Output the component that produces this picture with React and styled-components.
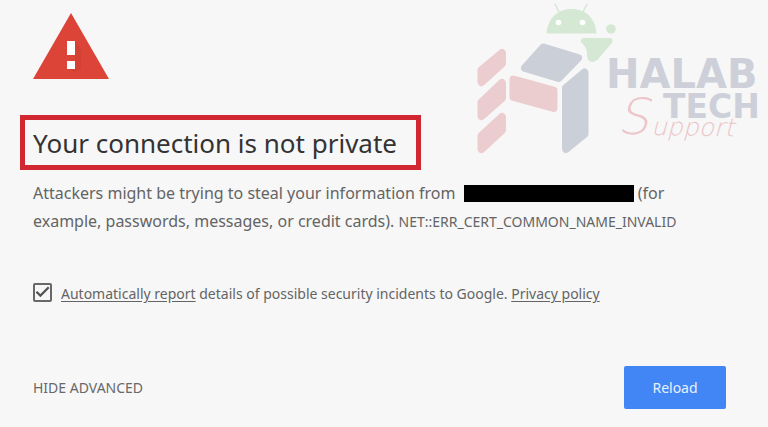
import React from "react";
import styled, { createGlobalStyle } from "styled-components";

const GlobalStyle = createGlobalStyle`
  * { box-sizing: border-box; }
  body {
    margin: 0;
    background: #f7f7f7;
    color: #646464;
    font-family: "Noto Sans", "Open Sans", sans-serif;
  }
`;

const Page = styled.main`
  position: relative;
  padding: 13px 42px 18px 33px;
`;

const WarningIcon = styled.svg`
  display: block;
  width: 76px;
  height: 66px;
`;

const Watermark = styled.svg`
  position: absolute;
  top: 0;
  right: 0;
  width: 298px;
  height: 160px;
  pointer-events: none;
`;

const Title = styled.h1`
  width: fit-content;
  margin: 36px 0 0 -13px;
  padding: 5px 19px 4px 8px;
  border: 5px solid #d02730;
  color: #333;
  font-size: 26px;
  font-weight: 400;
  line-height: 36px;
`;

const Message = styled.p`
  margin: 9px 0 0;
  font-size: 16px;
  line-height: 28px;
`;

const Redacted = styled.span`
  display: inline-block;
  width: 170px;
  height: 17px;
  margin: 0 0 0 4px;
  background: #000;
  vertical-align: -3px;
`;

const ErrorCode = styled.span`
  font-size: 14px;
`;

const ReportRow = styled.div`
  display: flex;
  align-items: center;
  gap: 9px;
  margin-top: 46px;
  font-size: 14px;
  line-height: 24px;
`;

const Checkbox = styled.input`
  appearance: none;
  flex: none;
  display: grid;
  place-items: center;
  width: 19px;
  height: 19px;
  margin: 0 0 4px;
  border: 2px solid #686868;
  border-radius: 2px;

  &:checked::before {
    content: "";
    width: 15px;
    height: 13px;
    background: #555;
    clip-path: polygon(4% 53%, 15% 42%, 36% 66%, 86% 8%, 97% 19%, 36% 90%);
  }
`;

const Link = styled.a`
  color: inherit;
  text-decoration: underline;
  text-underline-offset: 2px;
`;

const Actions = styled.div`
  display: flex;
  align-items: center;
  justify-content: space-between;
  margin-top: 60px;
`;

const TextButton = styled.button`
  padding: 0;
  border: 0;
  background: none;
  color: #686868;
  font: 14px/20px "Noto Sans", "Open Sans", sans-serif;
`;

const PrimaryButton = styled.button`
  min-width: 102px;
  padding: 12px 20px 11px;
  border: 0;
  border-radius: 2px;
  background: #4285f4;
  color: #e8f1ff;
  font: 14px/20px "Noto Sans", "Open Sans", sans-serif;
`;

const Brand = styled.text`
  fill: #cdd0d9;
  font-family: "DejaVu Sans", sans-serif;
  font-weight: 700;
  font-size: ${(p) => p.$size}px;
`;

const Script = styled.text`
  fill: #ebc5ca;
  font-family: "DejaVu Sans Light", "DejaVu Sans", sans-serif;
  font-style: italic;
  font-weight: 200;
  font-size: ${(p) => p.$size}px;
`;

function Logo() {
  return (
    <Watermark viewBox="470 0 298 160" role="img" aria-label="Halab Tech Support">
      <g fill="#d5e8d4" stroke="#d5e8d4">
        <path stroke="none" d="M546.5 33.5c1-14 10-24.500 25-24.500s24 10 25 24.500z" />
        <path fill="none" strokeWidth="1.500" strokeLinecap="round" d="M559 12l-4-8M583 12l4-8" />
        <circle stroke="none" cx="611" cy="29" r="4.800" />
        <path strokeWidth="6" strokeLinejoin="round" d="M584 41h25.500l-14 16.500q-5 4-5.500-2 .5-9-6-14.500z" />
      </g>
      <circle cx="558.500" cy="22.500" r="2.800" fill="#fff" />
      <circle cx="582.500" cy="22.500" r="2.800" fill="#fff" />
      <g fill="#cbcfd8" stroke="#cbcfd8" strokeWidth="8" strokeLinejoin="round">
        <path d="M543.500 47.500L578 58 558.500 78 525 68z" />
        <path d="M566 88l18.500-15.500V134L566 149z" />
      </g>
      <g fill="#ebcdd0" stroke="#ebcdd0" strokeWidth="8" strokeLinejoin="round">
        <path d="M481.500 70L502 53v10.500L481.500 82z" />
        <path d="M481.500 102.500L502 83v15l-20.500 18z" />
        <path d="M481.500 136L502 117v13l-20.500 19z" />
        <path d="M513.500 79.500l40 11v17.500l-40-11z" />
      </g>
      <Brand x="606" y="88" $size={40}>HALAB</Brand>
      <Brand x="663" y="118" $size={33}>TECH</Brand>
      <Script x="617" y="134" $size={50}>S</Script>
      <Script x="651" y="135" $size={25} transform="rotate(1 651 135)">upport</Script>
    </Watermark>
  );
}

export default function App() {
  return (
    <>
      <GlobalStyle />
      <Page>
        <WarningIcon viewBox="0 0 76 66" aria-hidden="true">
          <path fill="#db4437" d="M38 0l38 66H0z" />
          <path fill="#c93f34" d="M42 28l6 8v20l-6 3-8-3 8-8z" opacity=".45" />
          <path fill="#fff" d="M34 28h8v14h-8zM34 48h8v8h-8z" />
        </WarningIcon>
        <Title>Your connection is not private</Title>
        <Message>
          Attackers might be trying to steal your information from{" "}
          <Redacted role="img" aria-label="Redacted address" /> (for example, passwords,
          messages, or credit cards). <ErrorCode>NET::ERR_CERT_COMMON_NAME_INVALID</ErrorCode>
        </Message>
        <ReportRow>
          <Checkbox id="report" type="checkbox" defaultChecked />
          <span>
            <label htmlFor="report">
              <Link href="#report">Automatically report</Link> details of possible security
              incidents to Google.
            </label>{" "}
            <Link href="#privacy">Privacy policy</Link>
          </span>
        </ReportRow>
        <Actions>
          <TextButton type="button">HIDE ADVANCED</TextButton>
          <PrimaryButton type="button">Reload</PrimaryButton>
        </Actions>
        <Logo />
      </Page>
    </>
  );
}
